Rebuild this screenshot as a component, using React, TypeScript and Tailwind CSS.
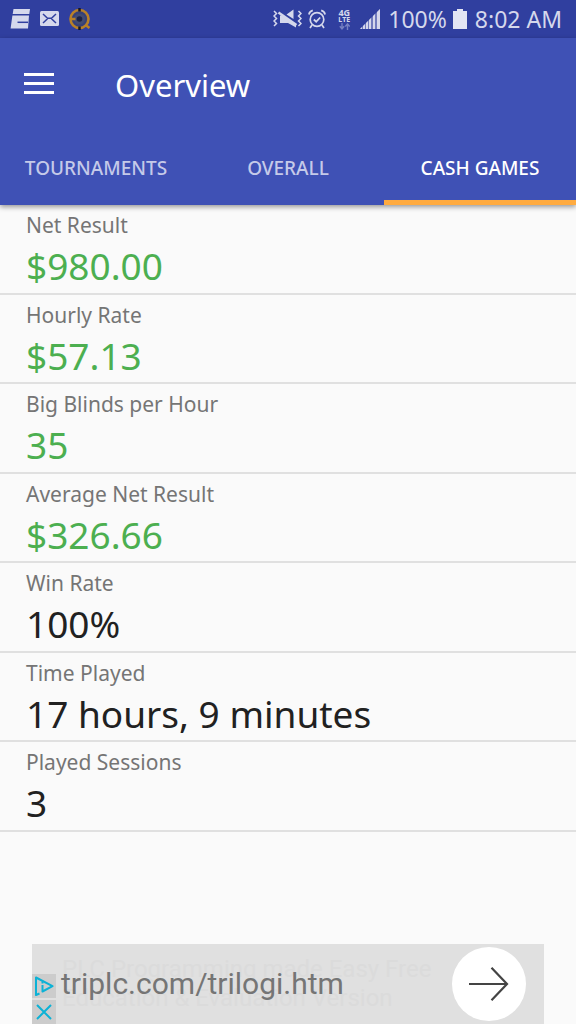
import { useState } from "react";

const tabs = ["Tournaments", "Overall", "Cash Games"];

const stats = [
    { label: "Net Result", value: "$980.00", positive: true },
    { label: "Hourly Rate", value: "$57.13", positive: true },
    { label: "Big Blinds per Hour", value: "35", positive: true },
    { label: "Average Net Result", value: "$326.66", positive: true },
    { label: "Win Rate", value: "100%", positive: false },
    { label: "Time Played", value: "17 hours, 9 minutes", positive: false },
    { label: "Played Sessions", value: "3", positive: false },
];

function StatusBar() {
    return (
        <div className="flex items-center justify-between h-[38px] pl-2.5 pr-3.5 bg-[#303f9f] text-[#d5d8ec]">
            <div className="flex items-center gap-2.5">
                <svg width="20" height="20" viewBox="0 0 20 20" fill="currentColor" aria-hidden="true">
                    <path d="M3.5 0H20l-.7 5H2.7zM2.4 6.500H19l-1 13H.6z" />
                    <path d="M7.500 13.300H18" stroke="#303f9f" strokeWidth="1.500" />
                </svg>
                <svg width="19" height="20" viewBox="0 0 19 20" aria-hidden="true">
                    <rect y="2" width="19" height="15" rx="1.500" fill="currentColor" />
                    <path d="M3 5l4.500 4.200h4L16 5M3 14l4.500-4.200M16 14l-4.500-4.200" fill="none" stroke="#303f9f" strokeWidth="1.500" />
                </svg>
                <svg width="22" height="22" viewBox="0 0 22 22" aria-hidden="true">
                    <circle cx="10.500" cy="11" r="9" fill="#35407a" stroke="#b98127" strokeWidth="2.600" />
                    <circle cx="10.500" cy="11" r="5.500" fill="#434c72" />
                    <circle cx="10.500" cy="11" r="2.800" fill="#1d2345" />
                    <path d="M1 11h5.500M16.500 17l4 3" stroke="#b98127" strokeWidth="2.600" />
                    <path d="M10.500 0v3.500M10.500 18.500V22" stroke="#14172a" strokeWidth="2.500" />
                </svg>
            </div>
            <div className="flex items-center text-[23px] leading-7">
                <svg width="29" height="20" viewBox="0 0 29 20" fill="none" stroke="currentColor" strokeWidth="1.500" className="mr-1.5" aria-hidden="true">
                    <path d="M1 2l2.500 2.500L1 7l2.500 2.500L1 12l2.500 2.500L1 17M25.500 2L28 4.500 25.500 7 28 9.500 25.500 12l2.500 2.500-2.500 2.500" />
                    <path d="M7 6.500h3L23 15v3.500l-8-4.500H7zM13.500 5.500L20.500.5v9.500z" fill="currentColor" stroke="none" />
                    <path d="M5.500 3.500l18 12.500" strokeWidth="2.400" />
                </svg>
                <svg width="18" height="20" viewBox="0 0 18 20" fill="none" stroke="currentColor" strokeWidth="1.700" className="mr-3" aria-hidden="true">
                    <circle cx="9" cy="10.500" r="6.800" />
                    <path d="M5.800 10.500l2.400 2.200 4-4.200M.9 5.500C1.300 3.300 2.700 2 4.800 1.400M17.100 5.500c-.4-2.200-1.800-3.500-3.900-4.100M4 16l-2 3M14 16l2 3" />
                </svg>
                <div className="flex flex-col items-center w-3 mr-2.5 font-bold">
                    <span className="text-[9px] leading-[8px]">4G</span>
                    <span className="text-[7px] leading-[6px]">LTE</span>
                    <svg width="11" height="7" viewBox="0 0 11 7" fill="none" stroke="#7680c2" strokeWidth="1.400" aria-hidden="true">
                        <path d="M3 0v5M.8 3.200L3 5.800l2.200-2.600M8.500 7V1.500M6.300 3.500l2.200-2.600 2.200 2.600" />
                    </svg>
                </div>
                <svg width="20" height="20" viewBox="0 0 20 20" fill="currentColor" className="mr-2" aria-hidden="true">
                    <path d="M0 20l2-2v2zM3 20v-3l2-2v5zM6 20v-6l2-2v8zM9 20v-9l2-2v11zM13 20V7l2-2v15zM17 20V3l3-3v20z" />
                    <path d="M0 20L20 0v20z" opacity=".4" />
                </svg>
                <span>100%</span>
                <svg width="14" height="20" viewBox="0 0 14 20" fill="#e3e5f3" className="ml-1.5 mr-2" aria-hidden="true">
                    <path d="M0 2h4V0h6v2h4v18H0z" />
                </svg>
                <span>8:02 AM</span>
            </div>
        </div>
    );
}

function AdBanner() {
    return (
        <aside className="flex items-center mx-8 h-20 bg-[#e0e0e0] font-['Roboto',sans-serif]">
            <div className="flex flex-col justify-end self-stretch gap-0.5 w-6">
                <a href="#adchoices" aria-label="AdChoices" className="flex items-center justify-center h-6 bg-[#cccccc]">
                    <svg width="20" height="20" viewBox="0 0 20 20" fill="none" stroke="#0cb2d6" strokeWidth="2">
                        <path d="M5.500 17.500L2 19V1.500l16.500 8.700-10 5.300V9" strokeLinejoin="round" />
                        <path d="M8.500 5.500v2" />
                    </svg>
                </a>
                <button type="button" aria-label="Close ad" className="flex items-center justify-center h-6 bg-[#cccccc]">
                    <svg width="16" height="16" viewBox="0 0 16 16" fill="none" stroke="#0cb2d6" strokeWidth="2">
                        <path d="M1 1l14 14M15 1L1 15" />
                    </svg>
                </button>
            </div>
            <a href="#ad" className="relative flex flex-1 items-center justify-between pl-[5px] pr-[18px]">
                {/* headline fading out behind the address */}
                <span className="absolute left-1.5 top-2 text-2xl leading-[29px] text-[#dbdbdb] whitespace-nowrap">
                    PLC Programming made Easy Free
                    <br />
                    Education &amp; Evaluation Version
                </span>
                <span className="relative text-3xl text-[#757575]">triplc.com/trilogi.htm</span>
                <span className="relative flex items-center justify-center size-[74px] rounded-full bg-white">
                    <svg width="40" height="34" viewBox="0 0 40 34" fill="none" stroke="#444444" strokeWidth="2.200" aria-hidden="true">
                        <path d="M0 17h38M22.500 .8L38 17 22.500 33.200" />
                    </svg>
                </span>
            </a>
        </aside>
    );
}

export default function App() {
    const [active, setActive] = useState("Cash Games");

    return (
        <div className="flex flex-col min-h-screen bg-[#fafafa] font-['Noto_Sans',sans-serif]">
            <StatusBar />
            <header className="relative bg-[#3f51b5] text-white shadow-[0_2px_5px_rgba(0,0,0,0.4)]">
                <div className="flex items-center h-[92px] px-6">
                    <button type="button" aria-label="Open menu">
                        <svg width="30" height="22" viewBox="0 0 30 22" fill="currentColor">
                            <path d="M0 0h30v3H0zM0 9h30v3H0zM0 18h30v3H0z" />
                        </svg>
                    </button>
                    <h1 className="ml-[61px] pt-0.5 text-[31px] leading-10">Overview</h1>
                </div>
                <nav role="tablist" className="grid grid-cols-3 h-[75px]">
                    {tabs.map((tab) => (
                        <button
                            key={tab}
                            type="button"
                            role="tab"
                            aria-selected={tab === active}
                            onClick={() => setActive(tab)}
                            className={`pt-1.5 border-b-5 text-[19px] font-medium uppercase ${tab === active ? "border-[#ffab40] text-white" : "border-transparent text-[#c5cae9]"}`}
                        >
                            {tab}
                        </button>
                    ))}
                </nav>
            </header>
            <dl className="grid flex-1 auto-rows-fr mb-28">
                {stats.map((stat) => (
                    <div key={stat.label} className="px-[26px] pt-1 border-b-2 border-[#e0e0e0]">
                        <dt className="text-[21px] leading-8 text-[#757575]">{stat.label}</dt>
                        <dd className={`text-[37px] leading-[50px] ${stat.positive ? "text-[#4caf50]" : "text-[#212121]"}`}>{stat.value}</dd>
                    </div>
                ))}
            </dl>
            <AdBanner />
        </div>
    );
}
